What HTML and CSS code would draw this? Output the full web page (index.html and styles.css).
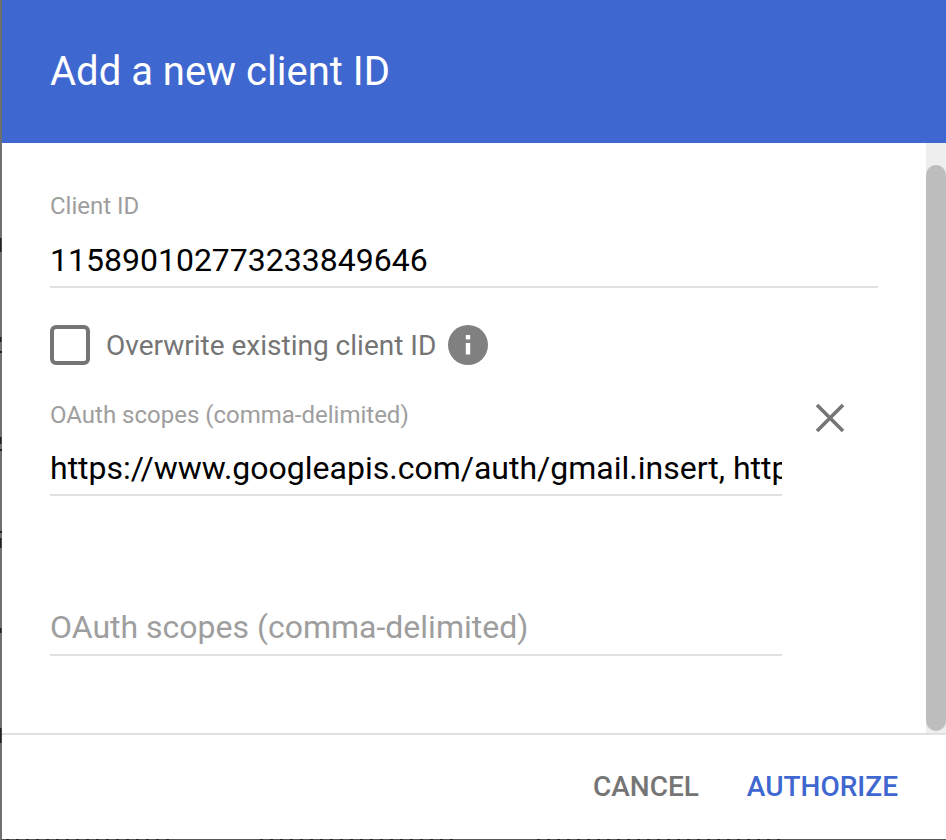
FILE: index.html
```html
<!DOCTYPE html>
<html lang="en">
<head>
    <meta charset="UTF-8">
    <title>Add a new client ID</title>
    <link rel="stylesheet" href="styles.css">
</head>
<body>
    <div class="dialog">
        <h2 class="titulo">Add a new client ID</h2>
        <div class="cuerpo">
            <div class="form">
                <div class="campo campo-id">
                    <label class="etiqueta">Client ID</label>
                    <div class="valor">115890102773233849646</div>
                </div>
                <div class="check-fila">
                    <span class="check"></span>
                    <span class="check-texto">Overwrite existing client ID</span>
                    <svg class="info" width="40" height="40" viewBox="0 0 40 40">
                        <circle cx="20" cy="20" r="20" fill="#808080"/>
                        <rect x="17.8" y="18" width="4.4" height="11.5" fill="#fff"/>
                        <rect x="17.8" y="10" width="4.4" height="4.4" fill="#fff"/>
                    </svg>
                </div>
                <div class="scope-fila">
                    <div class="campo campo-scope">
                        <label class="etiqueta">OAuth scopes (comma-delimited)</label>
                        <div class="valor recorte">https://www.googleapis.com/auth/gmail.insert, https://www.googleapis.com/auth/gmail.send</div>
                    </div>
                    <svg class="cerrar" width="30" height="30" viewBox="0 0 30 30">
                        <path d="M2 2L28 28M28 2L2 28" stroke="#757575" stroke-width="3.6" fill="none"/>
                    </svg>
                </div>
                <div class="campo campo-vacio">
                    <div class="placeholder">OAuth scopes (comma-delimited)</div>
                </div>
            </div>
            <div class="scroll"><div class="thumb"></div></div>
        </div>
        <div class="pie">
            <button class="boto boto-gris">CANCEL</button>
            <button class="boto boto-azul">AUTHORIZE</button>
        </div>
    </div>
    <!-- restes de la pagina de darrere que es veuen a les vores -->
    <svg class="vores" width="946" height="840" viewBox="0 0 946 840">
        <g fill="#222">
            <rect x="0" y="238" width="1.5" height="14"/>
            <rect x="0" y="337" width="1.5" height="5"/>
            <rect x="0" y="351" width="2" height="2"/>
            <rect x="0" y="437" width="1.5" height="7"/>
            <rect x="0" y="449" width="2" height="2"/>
            <rect x="0" y="531" width="2" height="2"/>
            <rect x="0" y="538" width="1.5" height="10"/>
            <rect x="0" y="628" width="1.5" height="5"/>
            <rect x="0" y="728" width="1.5" height="15"/>
        </g>
        <g stroke="#222" stroke-width="1" stroke-dasharray="3 7">
            <line x1="6" y1="839.5" x2="175" y2="839.5"/>
            <line x1="260" y1="839.5" x2="459" y2="839.5"/>
            <line x1="537" y1="839.5" x2="785" y2="839.5"/>
        </g>
    </svg>
</body>
</html>
```

FILE: styles.css
```css
html {
    height: 100%;
}

body {
    margin: 0;
    height: 840px;
    overflow: hidden;
    background: #fff;
    font-family: 'Roboto', sans-serif;
}

.dialog {
    height: 839px;
    border-left: 2px solid #707070;
    border-bottom: 1px solid #555;
    display: flex;
    flex-direction: column;
    box-sizing: content-box;
}

.vores {
    position: absolute;
    top: 0;
    left: 0;
    pointer-events: none;
}

.titulo {
    margin: 0;
    height: 143px;
    padding-left: 48px;
    background-color: #3f67d0;
    color: #fff;
    font-size: 40px;
    font-weight: 400;
    line-height: 143px;
    flex: none;
}

.cuerpo {
    height: 590px;
    display: flex;
    flex: none;
}

.form {
    flex: 1;
    padding: 49px 48px 0 48px;
}

.campo {
    border-bottom: 2px solid #e0e0e0;
}

.etiqueta {
    display: block;
    font-size: 24px;
    line-height: 28px;
    color: #9e9e9e;
}

.valor {
    margin-top: 20px;
    font-size: 32px;
    line-height: 40px;
    height: 46px;
    color: #000;
}

.recorte {
    margin-top: 19px;
    white-space: nowrap;
    overflow: hidden;
}

.campo-id {
    width: 828px;
}

.check-fila {
    display: flex;
    align-items: center;
    margin-top: 37px;
    height: 40px;
}

.check {
    width: 40px;
    height: 40px;
    box-sizing: border-box;
    border: 4px solid #757575;
    border-radius: 6px;
}

.check-texto {
    margin-left: 16px;
    font-size: 28px;
    color: #757575;
}

.info {
    margin-left: 12px;
}

.scope-fila {
    display: flex;
    align-items: flex-start;
    margin-top: 36px;
}

.campo-scope {
    width: 732px;
}

.cerrar {
    margin: 2px 0 0 33px;
}

.campo-vacio {
    width: 732px;
    margin-top: 110px;
    height: 48px;
}

.placeholder {
    font-size: 32px;
    line-height: 42px;
    color: #9e9e9e;
}

.scroll {
    width: 20px;
    background-color: #eeeeee;
    padding-top: 22px;
    box-sizing: border-box;
    flex: none;
}

.thumb {
    height: 566px;
    background-color: #bdbdbd;
    border-radius: 10px;
}

.pie {
    flex: 1;
    border-top: 2px solid #e0e0e0;
    display: flex;
    justify-content: flex-end;
    align-items: center;
    padding: 0 48px 2px 0;
    gap: 48px;
}

.boto {
    background: none;
    border: none;
    padding: 0;
    font-family: 'Roboto', sans-serif;
    font-size: 28px;
    font-weight: 500;
}

.boto-gris {
    color: #757575;
}

.boto-azul {
    color: #3f67d0;
}
```
